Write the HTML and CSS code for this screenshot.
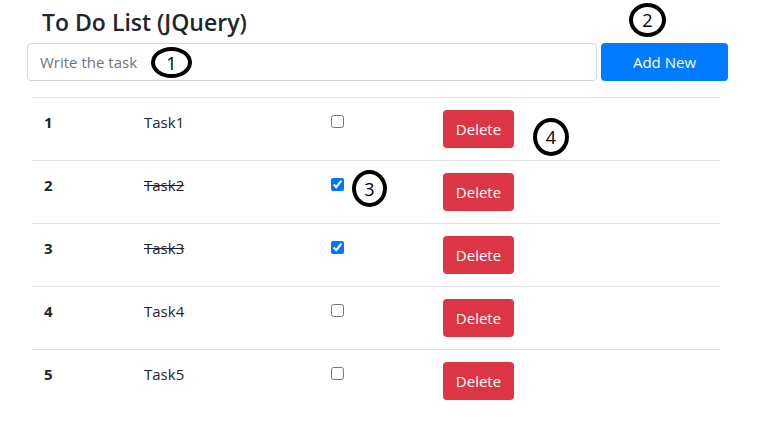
FILE: index.html
```html
<!DOCTYPE html>
<html>
<head>
<meta charset="utf-8">
<link rel="stylesheet" href="styles.css">
</head>
<body>
<div class="app">
  <h4 class="title">To Do List (JQuery)</h4>
  <div class="form-row">
    <input class="task-input" type="text" placeholder="Write the task">
    <button class="btn btn-add">Add New</button>
  </div>
  <table class="tasks">
    <colgroup><col class="c1"><col class="c2"><col class="c3"><col class="c4"></colgroup>
    <tbody>
      <tr><th>1</th><td>Task1</td><td><input class="chk" type="checkbox"></td><td><button class="btn btn-del">Delete</button></td></tr>
      <tr><th>2</th><td class="done">Task2</td><td><input class="chk" type="checkbox" checked></td><td><button class="btn btn-del">Delete</button></td></tr>
      <tr><th>3</th><td class="done">Task3</td><td><input class="chk" type="checkbox" checked></td><td><button class="btn btn-del">Delete</button></td></tr>
      <tr><th>4</th><td>Task4</td><td><input class="chk" type="checkbox"></td><td><button class="btn btn-del">Delete</button></td></tr>
      <tr><th>5</th><td>Task5</td><td><input class="chk" type="checkbox"></td><td><button class="btn btn-del">Delete</button></td></tr>
    </tbody>
  </table>
</div>
<span class="mark mark-1">1</span>
<span class="mark mark-2">2</span>
<span class="mark mark-3">3</span>
<span class="mark mark-4">4</span>
</body>
</html>
```
FILE: styles.css
```css
* { box-sizing: border-box; }
html, body { margin: 0; padding: 0; background: #fff; }
body {
  font-family: "Open Sans", "Noto Sans", sans-serif;
  color: #212529;
  font-size: 15px;
  line-height: 1.5;
  width: 757px;
  height: 438px;
  position: relative;
  overflow: hidden;
}
.app { padding: 8px 0 0 27px; }
.title {
  margin: 0 0 6px 15px;
  font-size: 23px;
  font-weight: 600;
  line-height: 29px;
  color: #212529;
}
.form-row { display: flex; gap: 4px; }
.task-input {
  width: 570px;
  height: 38px;
  border: 1px solid #ced4da;
  border-radius: 4px;
  padding: 6px 12px;
  font: inherit;
  color: #495057;
}
.task-input::placeholder { color: #6c757d; }
.btn {
  font: inherit;
  border: 1px solid transparent;
  border-radius: 4px;
  color: #fff;
  padding: 6px 12px;
  line-height: 24px;
}
.btn-add { width: 127px; height: 38px; background: #007bff; }
.tasks {
  margin: 16px 0 0 5px;
  width: 688px;
  border-collapse: collapse;
  table-layout: fixed;
}
.c1 { width: 100px; }
.c2 { width: 187px; }
.c3 { width: 112px; }
.c4 { width: 289px; }
.tasks th, .tasks td {
  padding: 12px;
  border-top: 1px solid #dee2e6;
  vertical-align: top;
  text-align: left;
  line-height: 24px;
}
.tasks th { font-weight: 700; }
.done { text-decoration: line-through; }
.chk { display: block; margin: 5px 0 0; width: 13px; height: 13px; accent-color: #0075ff; }
.btn-del { background: #dc3545; height: 38px; width: 71px; padding: 6px 0; text-align: center; }
.mark {
  position: absolute;
  border: 4px solid #000;
  border-radius: 50%;
  display: flex;
  align-items: center;
  justify-content: center;
  font-family: "Open Sans", sans-serif;
  font-size: 18px;
  line-height: 1;
  color: #000;
}
.mark-1 { left: 151px; top: 47px; width: 41px; height: 31px; }
.mark-2 { left: 629px; top: 3px; width: 37px; height: 34px; }
.mark-3 { left: 352px; top: 170px; width: 35px; height: 37px; }
.mark-4 { left: 533px; top: 118px; width: 36px; height: 38px; }
```
